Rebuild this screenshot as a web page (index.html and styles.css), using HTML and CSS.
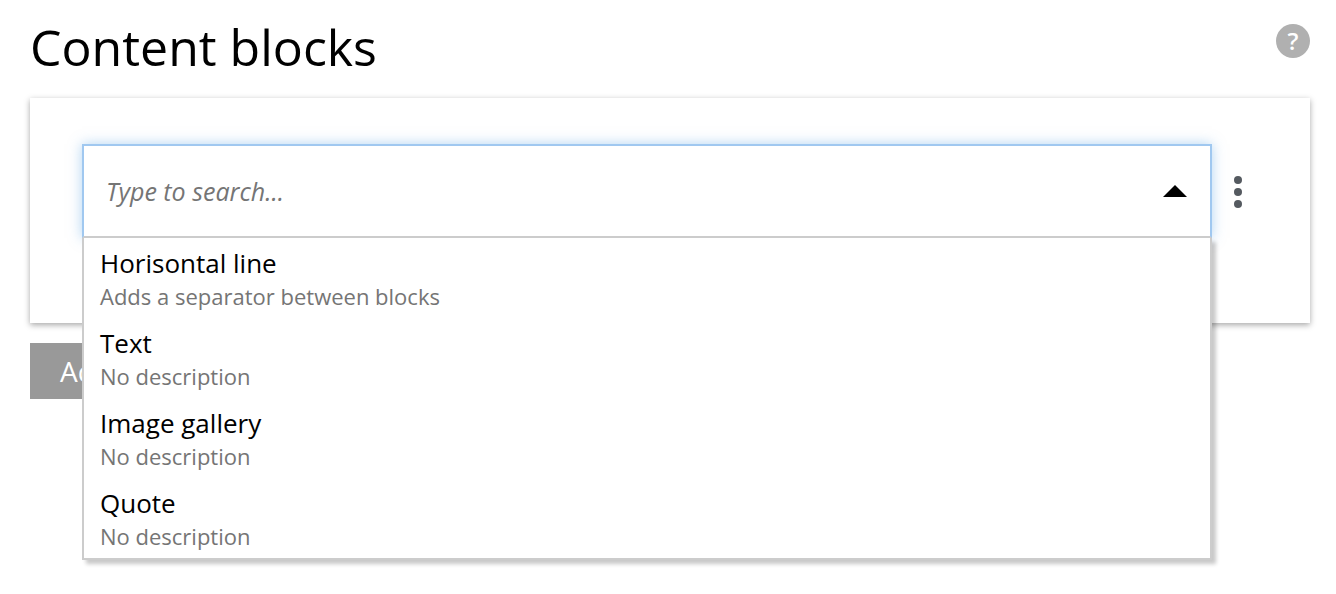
FILE: index.html
```html
<!DOCTYPE html>
<html lang="en">
<head>
<meta charset="utf-8">
<title>Content blocks</title>
<link rel="stylesheet" href="styles.css">
</head>
<body>
<main class="page">
  <header class="header">
    <h1 class="title">Content blocks</h1>
    <button class="help" type="button" aria-label="Help">?</button>
  </header>
  <section class="card">
    <div class="row">
      <div class="combo">
        <div class="field">
          <input class="search" type="text" placeholder="Type to search..." aria-label="Search block types">
          <button class="toggle" type="button" aria-label="Close list"><svg width="24" height="12" viewBox="0 0 24 12"><path d="M0 12 12 0 24 12z"/></svg></button>
        </div>
        <ul class="menu" role="listbox">
          <li class="option" role="option"><span class="name">Horisontal line</span><span class="desc">Adds a separator between blocks</span></li>
          <li class="option" role="option"><span class="name">Text</span><span class="desc">No description</span></li>
          <li class="option" role="option"><span class="name">Image gallery</span><span class="desc">No description</span></li>
          <li class="option" role="option"><span class="name">Quote</span><span class="desc">No description</span></li>
        </ul>
      </div>
      <button class="more" type="button" aria-label="More actions"><svg width="8" height="34" viewBox="0 0 8 34"><circle cx="4" cy="6" r="4"/><circle cx="4" cy="18" r="4"/><circle cx="4" cy="30" r="4"/></svg></button>
    </div>
  </section>
  <button class="add" type="button">Add</button>
</main>
</body>
</html>
```
FILE: styles.css
```css
* { box-sizing: border-box; }
body { margin: 0; background: #fff; color: #000; font-family: "Open Sans", "Noto Sans", sans-serif; }
button { border: 0; padding: 0; background: none; font: inherit; cursor: pointer; }
svg { display: block; }
.page { min-height: 100vh; padding: 12px 26px 0 30px; }
.header { display: flex; justify-content: space-between; align-items: flex-start; height: 86px; }
.title { margin: 0; font-size: 50px; line-height: 70px; font-weight: 400; }
.help { width: 34px; height: 34px; margin-top: 12px; border-radius: 50%; background: #b0b0b0; color: #fff; font-size: 24px; line-height: 34px; font-weight: 600; }
.card { padding: 46px 68px 85px 52px; background: #fff; box-shadow: 0 2px 6px rgba(0, 0, 0, .35); }
.row { display: flex; align-items: center; gap: 22px; }
.combo { position: relative; flex: 1; }
.field { display: flex; align-items: center; height: 94px; padding: 0 23px 0 22px; border: 2px solid #a0c8f0; border-bottom-color: #ccc; background: #fff; box-shadow: 0 0 12px rgba(100, 170, 230, .5); }
.search { flex: 1; min-width: 0; padding: 0; border: 0; outline: 0; background: none; color: #000; font: italic 25px/34px "Open Sans", "Noto Sans", sans-serif; }
.search::placeholder { color: #757575; opacity: 1; }
.menu { position: absolute; z-index: 1; top: 100%; left: 0; right: 0; margin: 0; padding: 0; list-style: none; border: 2px solid #ccc; border-top: 0; background: #fff; box-shadow: 4px 4px 4px rgba(0, 0, 0, .22); }
.option { padding: 7px 16px; height: 80px; }
.name, .desc { display: block; }
.name { font-size: 26px; line-height: 36px; }
.desc { color: #757575; font-size: 22px; line-height: 30px; }
.more { width: 8px; color: #555a60; fill: currentColor; }
.add { display: block; height: 56px; margin-top: 20px; padding: 0 30px; background: #999; color: #fff; font-size: 28px; }
```
